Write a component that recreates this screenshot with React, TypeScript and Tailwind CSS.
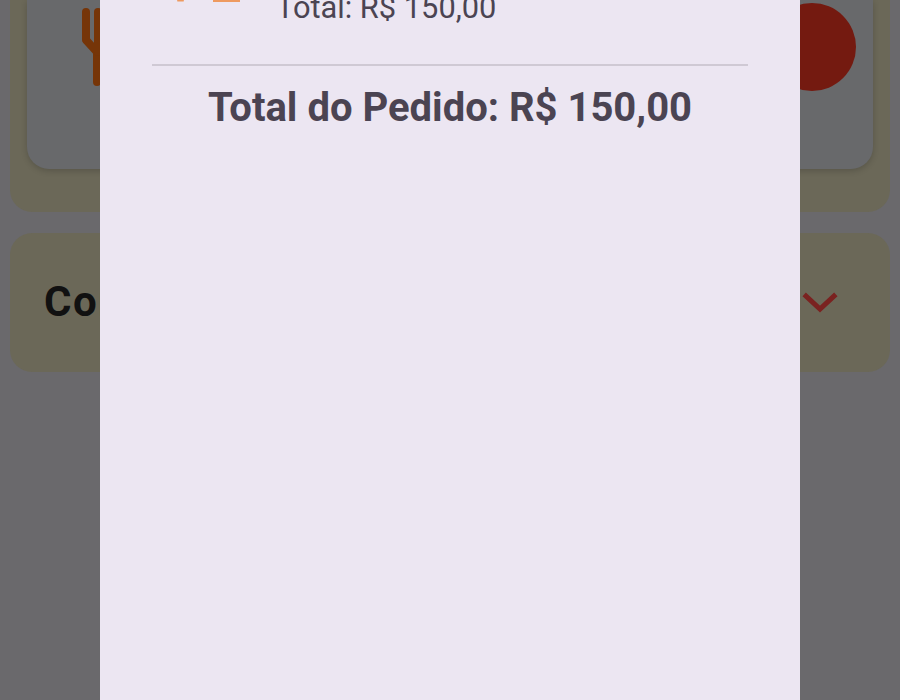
import React from "react";

export default function App() {
  return (
    <div className="relative h-[700px] w-[900px] overflow-hidden bg-[#6a696c] font-['Roboto',sans-serif]">
      <div className="flex flex-col gap-[21px] px-[10px]">
        <section className="h-[212px] rounded-b-[22px] bg-[#6b6858] px-[17px]">
          <div className="relative h-[169px] rounded-b-[22px] bg-[#68696b] shadow-[0_2px_6px_rgba(0,0,0,0.18)]">
            <svg className="absolute left-[54px] top-[8px]" width="22" height="80" viewBox="0 0 22 80">
              <path d="M5 4V32L16 44V74" fill="none" stroke="#763508" strokeWidth="8" strokeLinecap="round" strokeLinejoin="round" />
              <path d="M17 4V44" fill="none" stroke="#763508" strokeWidth="8" strokeLinecap="round" />
            </svg>
            <div className="absolute right-[17px] top-[3px] h-[88px] w-[88px] rounded-full bg-[#741a10]" />
          </div>
        </section>
        <section className="flex h-[139px] items-center justify-between rounded-[22px] bg-[#6b6858] pl-[34px] pr-[52px]">
          <h2 className="mb-[2px] text-[42px] font-bold tracking-[1.5px] text-[#111111]">Conta</h2>
          <svg width="36" height="24" viewBox="0 0 36 24" fill="none">
            <path d="M4 5L18 18L32 5" stroke="#7a2220" strokeWidth="5" strokeLinecap="square" />
          </svg>
        </section>
      </div>
      <div className="absolute inset-y-0 left-[100px] w-[700px] bg-[#ece6f2] px-[52px] text-[#4b4452]">
        <div className="relative flex h-[66px] items-start overflow-hidden border-b-2 border-[#cfc9d4]">
          <svg className="absolute left-[22px] top-0" width="68" height="3" viewBox="0 0 68 3">
            <rect x="3" y="0" width="7" height="1.5" rx="0.75" fill="#ee9a60" />
            <rect x="39" y="0" width="27" height="2" fill="#ee9a60" />
          </svg>
          <p className="ml-[124px] mt-[-10px] text-[30.8px] leading-[36px]">Total: R$ 150,00</p>
        </div>
        <p className="mt-[18px] text-center text-[40px] font-bold leading-[48px]">Total do Pedido: R$ 150,00</p>
      </div>
    </div>
  );
}
